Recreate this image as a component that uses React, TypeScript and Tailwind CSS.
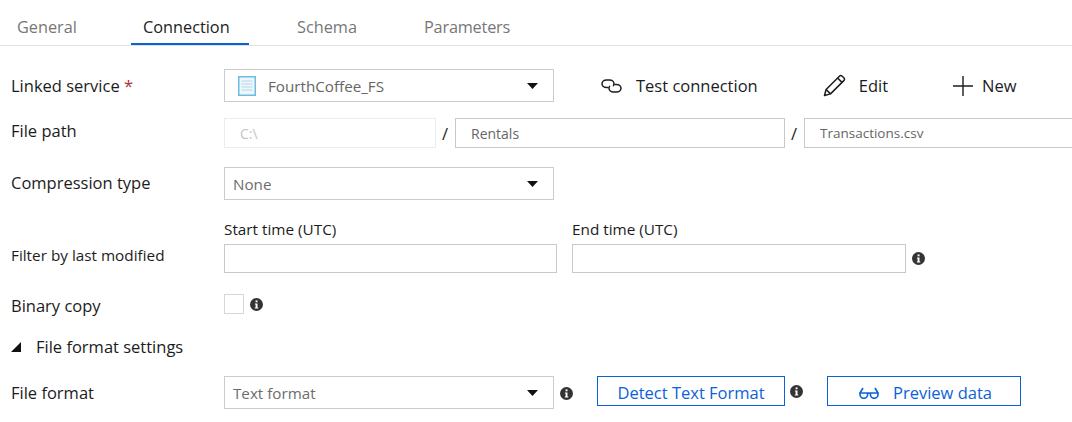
import React from "react";

const font = { fontFamily: '"Open Sans", "Noto Sans", sans-serif' };

function Info({ className = "" }: { className?: string }) {
  return (
    <svg width="13" height="13" viewBox="0 0 13 13" className={`shrink-0 ${className}`}>
      <circle cx="6.5" cy="6.5" r="6.5" fill="#333333" />
      <rect x="5.6" y="2.4" width="1.9" height="1.9" fill="#fff" />
      <path d="M4.9 5.4h2.6v4.2h.8v1H4.8v-1h.8V6.4h-.7z" fill="#fff" />
    </svg>
  );
}

function Caret() {
  return (
    <svg width="11" height="6" viewBox="0 0 11 6" className="shrink-0">
      <path d="M0 0h11L5.5 6z" fill="#111" />
    </svg>
  );
}

function Select({ children }: { children: React.ReactNode }) {
  return (
    <div className="flex h-[33px] w-[330px] shrink-0 items-center justify-between border border-[#cccccc] pr-[15px] text-[15.2px] text-[#6d6d6d]">
      <span className="pt-[1px]">{children}</span>
      <Caret />
    </div>
  );
}

export default function App() {
  return (
    <div style={font} className="h-[422px] w-[1072px] overflow-hidden bg-white text-[16.5px] text-[#1c1c1c]">
      <div className="flex h-[46px] border-b border-[#e3e3e3] pl-[17px] text-[16.3px] text-[#777777]">
        <div className="flex h-[45px] w-[114px] shrink-0 items-center pt-[11px] pb-[2px]">General</div>
        <div className="flex h-[45px] w-[118px] shrink-0 items-center border-b-2 border-[#0b62d6] pt-[11px] pl-[12px] text-[#222222]">Connection</div>
        <div className="ml-[48px] flex h-[45px] w-[127px] shrink-0 items-center pt-[11px] pb-[2px]">Schema</div>
        <div className="flex h-[45px] items-center pt-[11px] pb-[2px] tracking-[-0.2px]">Parameters</div>
      </div>

      <div className="pl-[11px]">
        <div className="mt-[23px] flex h-[33px] items-center">
          <div className="w-[213px] shrink-0 pt-[1px]">
            Linked service <span className="text-[#b03030]">*</span>
          </div>
          <Select>
            <span className="flex items-center">
              <svg width="18" height="20" viewBox="0 0 18 20" className="mr-[12px] ml-[13px]">
                <rect x="0.75" y="0.75" width="16.5" height="18.5" fill="#eef7fc" stroke="#6cbde0" strokeWidth="1.5" />
                <path d="M3.5 5h11M3.5 8h11M3.5 11h11M3.5 14h11" stroke="#b5d8ea" strokeWidth="1.2" />
              </svg>
              <span className="text-[#666666]">FourthCoffee_FS</span>
            </span>
          </Select>
          <div className="ml-[47px] flex items-center">
            <svg width="21" height="14" viewBox="0 0 21 14" fill="none" stroke="#1c1c1c" strokeWidth="1.5">
              <path d="M7 8.5H5.5C3 8.5 1 6.9 1 4.8S3 1 5.5 1h3C11 1 13 2.7 13 4.8c0 .7-.2 1.3-.6 1.8" strokeLinecap="round" />
              <path d="M14 5.5h1.5C18 5.5 20 7.1 20 9.2S18 13 15.5 13h-3C10 13 8 11.3 8 9.2c0-.7.2-1.3.6-1.8" strokeLinecap="round" />
            </svg>
            <span className="ml-[14px] pt-[1px]">Test connection</span>
          </div>
          <div className="ml-[65px] flex items-center">
            <svg width="23" height="23" viewBox="0 0 23 23" fill="none" stroke="#1c1c1c" strokeWidth="1.5">
              <path d="M1.5 21.5l1.6-6L16.4 2.2a2 2 0 0 1 2.8 0l1.6 1.6a2 2 0 0 1 0 2.8L7.5 19.9z" strokeLinejoin="round" />
              <path d="M14.6 4l4.4 4.4M3.1 15.5l4.4 4.4" />
            </svg>
            <span className="ml-[13px] pt-[1px]">Edit</span>
          </div>
          <div className="ml-[65px] flex items-center">
            <svg width="20" height="20" viewBox="0 0 20 20" stroke="#1c1c1c" strokeWidth="1.4">
              <path d="M10 0v20M0 10h20" />
            </svg>
            <span className="ml-[9px] pt-[1px]">New</span>
          </div>
        </div>

        <div className="mt-[16px] flex h-[30px] items-center">
          <div className="w-[213px] shrink-0 pb-[4px]">File path</div>
          <div className="flex h-[30px] w-[212px] shrink-0 items-center border border-[#ececec] pl-[15px] text-[14px] text-[#c4c4c4]">C:\</div>
          <div className="w-[19px] shrink-0 pt-[3px] pr-[1px] text-center">/</div>
          <div className="flex h-[30px] w-[330px] shrink-0 items-center border border-[#c8c8c8] pl-[15px] text-[14px] text-[#666666]">Rentals</div>
          <div className="w-[19px] shrink-0 pt-[3px] pr-[1px] text-center">/</div>
          <div className="flex h-[30px] w-[300px] shrink-0 items-center border border-r-0 border-[#c8c8c8] pl-[15px] text-[13.5px] text-[#666666]">Transactions.csv</div>
        </div>

        <div className="mt-[19px] flex h-[33px] items-center">
          <div className="w-[213px] shrink-0 pb-[1px]">Compression type</div>
          <Select><span className="pl-[8px]">None</span></Select>
        </div>

        <div className="mt-[19px] flex h-[54px] items-end">
          <div className="w-[213px] shrink-0 pb-[6px] text-[15.3px]">Filter by last modified</div>
          <div className="w-[333px] shrink-0">
            <div className="mb-[5px] h-[20px] text-[15.3px] leading-[20px]">Start time (UTC)</div>
            <div className="h-[29px] border border-[#c8c8c8]" />
          </div>
          <div className="ml-[15px] w-[334px] shrink-0">
            <div className="mb-[5px] h-[20px] text-[15.3px] leading-[20px]">End time (UTC)</div>
            <div className="h-[29px] border border-[#c8c8c8]" />
          </div>
          <Info className="mb-[8px] ml-[6px]" />
        </div>

        <div className="mt-[21px] flex h-[20px] items-center">
          <div className="w-[213px] shrink-0 pt-[5px]">Binary copy</div>
          <div className="h-[20px] w-[20px] shrink-0 border border-[#d6d6d6]" />
          <Info className="ml-[6px]" />
        </div>

        <div className="mt-[23px] flex h-[20px] items-center">
          <svg width="10" height="10" viewBox="0 0 10 10" className="shrink-0">
            <path d="M10 0v10H0z" fill="#111" />
          </svg>
          <span className="ml-[15px]">File format settings</span>
        </div>

        <div className="mt-[19px] flex h-[33px] items-start">
          <div className="flex h-[33px] w-[213px] shrink-0 items-center pt-[2px]">File format</div>
          <Select><span className="pl-[8px]">Text format</span></Select>
          <Info className="mt-[11px] ml-[6px]" />
          <div className="ml-[24px] flex h-[30px] w-[188px] shrink-0 items-center justify-center border border-[#0b62d6] pt-[5px] text-[#0b62d6]">Detect Text Format</div>
          <Info className="mt-[9px] ml-[5px]" />
          <div className="ml-[24px] flex h-[30px] w-[194px] shrink-0 items-center justify-center border border-[#0b62d6] pt-[5px] text-[#0b62d6]">
            <svg width="20" height="13" viewBox="0 0 20 13" fill="none" stroke="#0b62d6" strokeWidth="1.6" className="mr-[12px] ml-[3px] mb-[3px]">
              <path d="M1 7h7.6v1.5a3.3 3.3 0 0 1-7.6 0zM11.4 7H19v1.5a3.3 3.3 0 0 1-7.6 0zM8.6 7.5q1.4-1 2.8 0" />
              <path d="M1 7l3-5M19 7l-3-5" />
            </svg>
            <span className="pl-[2px]">Preview data</span>
          </div>
        </div>
      </div>
    </div>
  );
}
